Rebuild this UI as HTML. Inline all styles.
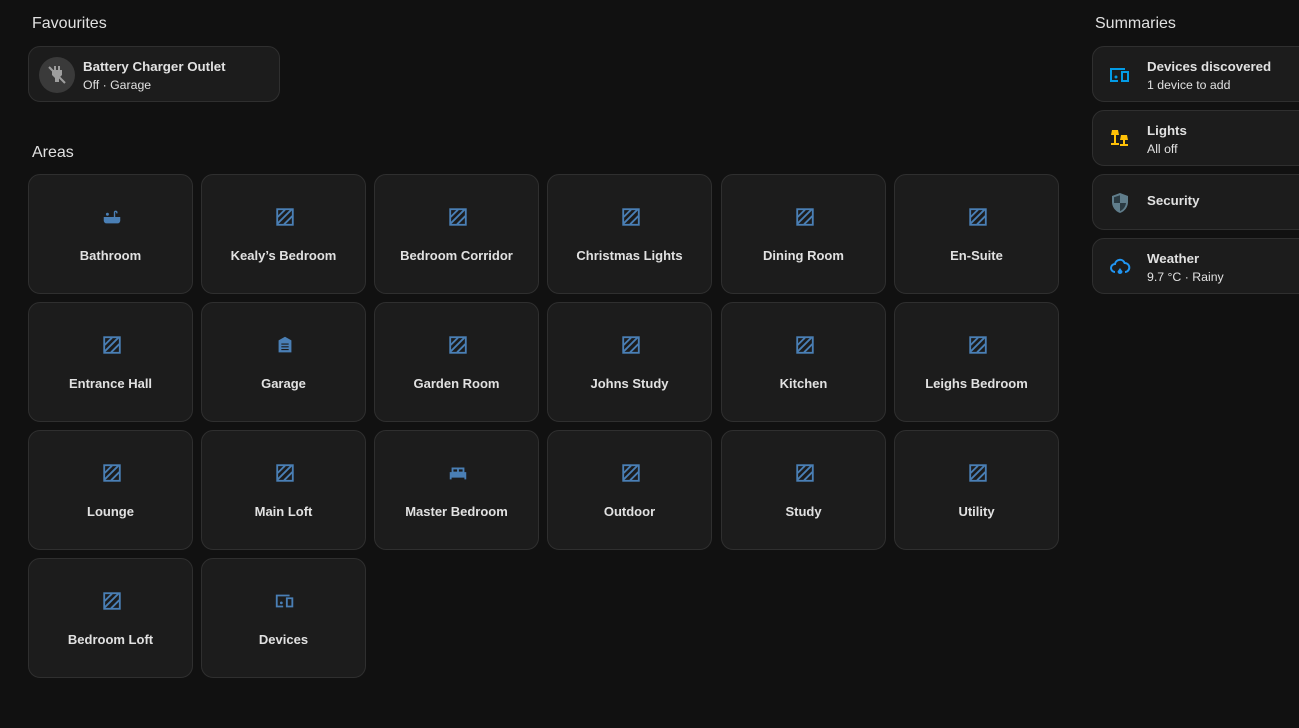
<!DOCTYPE html><html><head><style>
body{margin:0;background:#111111;width:1299px;height:728px;overflow:hidden;font-family:"Liberation Sans",Roboto,sans-serif;color:#e1e1e1;position:relative}
h2{position:absolute;margin:0;font-size:16px;font-weight:normal;color:#e1e1e1}
.card{position:absolute;background:#1c1c1c;border:1px solid #2f2f2f;border-radius:12px;box-sizing:border-box}
.tile{width:165px;height:120px}
.tile svg{position:absolute;left:72px;top:31px;width:22px;height:22px}
.tile .l{position:absolute;left:0;right:0;top:73px;text-align:center;font-size:13px;font-weight:bold;color:#e1e1e1}
.row{height:56px}
.row .t{position:absolute;left:54px;top:12px;font-size:13.3px;font-weight:bold}
.row .s{position:absolute;left:54px;top:31px;font-size:12.3px;color:#e1e1e1}
.row svg{position:absolute;left:15px;top:16px;width:24px;height:24px}
</style></head><body>
<h2 style="left:32px;top:15px">Favourites</h2>
<h2 style="left:32px;top:144px">Areas</h2>
<h2 style="left:1095px;top:15px">Summaries</h2>

<div class="card row" style="left:28px;top:46px;width:252px">
<div style="position:absolute;left:10px;top:10px;width:36px;height:36px;border-radius:50%;background:#3a3a3a"></div>
<svg viewBox="0 0 24 24" style="left:16px;top:16px"><path fill="#9e9e9e" d="M9 3v4H7v5l3 3v4h4v-4l3-3V7h-2V3h-2v4h-2V3z"/><path stroke="#9e9e9e" stroke-width="2" d="M4 4l16 16"/></svg>
<div class="t">Battery Charger Outlet</div><div class="s">Off · Garage</div></div>

<div class="card row" style="left:1092px;top:46px;width:220px">
<svg viewBox="0 0 24 24"><path fill="none" stroke="#039be5" stroke-width="2" d="M3 17V6h14M2 18h8M14 9h6v9h-6z"/><circle cx="8" cy="14" r="1.5" fill="#039be5"/></svg>
<div class="t">Devices discovered</div><div class="s">1 device to add</div></div>
<div class="card row" style="left:1092px;top:110px;width:220px">
<svg viewBox="0 0 24 24" fill="#ffc107"><path d="M4 3h6l1 5H3z M6 8h2v8H6z M3 16h8v2H3z M13 8h6l1 5h-8z M15 13h2v4h-2z M12 17h8v2h-8z"/></svg>
<div class="t">Lights</div><div class="s">All off</div></div>
<div class="card row" style="left:1092px;top:174px;width:220px">
<svg viewBox="0 0 24 24"><path fill="#607d8b" d="M12 2l8 3v6c0 5-3.5 9.5-8 11-4.5-1.5-8-6-8-11V5z"/><path fill="#2a3a42" d="M12 4.2V12h6c-.4 3.7-2.9 7-6 8.2V12H6V6.3z"/></svg>
<div class="t" style="top:18px">Security</div></div>
<div class="card row" style="left:1092px;top:238px;width:220px">
<svg viewBox="0 0 24 24"><path fill="none" stroke="#2196f3" stroke-width="2" d="M7 17a4 4 0 0 1 0-8 5 5 0 0 1 9.6-1A4.5 4.5 0 0 1 17 17"/><path fill="#2196f3" d="M12 13l2.5 3.5a2.5 2.5 0 1 1-5 0z"/></svg>
<div class="t">Weather</div><div class="s">9.7 °C · Rainy</div></div>

<div id="g"></div>
<script>
var names=["Bathroom","Kealy’s Bedroom","Bedroom Corridor","Christmas Lights","Dining Room","En-Suite","Entrance Hall","Garage","Garden Room","Johns Study","Kitchen","Leighs Bedroom","Lounge","Main Loft","Master Bedroom","Outdoor","Study","Utility","Bedroom Loft","Devices"];
var xs=[28,201,374,547,721,894];
var C="#4a7fb5";
var hatch='<svg viewBox="0 0 24 24"><rect x="3.5" y="3.5" width="17" height="17" fill="none" stroke="'+C+'" stroke-width="2"/><path stroke="'+C+'" stroke-width="2" d="M4 12L12 4M4 19L19 4M11 20L20 11"/></svg>';
var icons={0:'<svg viewBox="0 0 24 24" fill="'+C+'"><circle cx="7" cy="9" r="1.6"/><path d="M3 12h11V7a2 2 0 0 1 4 0v1h-1.5V7a.5.5 0 0 0-1 0v5H21v4a3 3 0 0 1-3 3H6a3 3 0 0 1-3-3z"/></svg>',
7:'<svg viewBox="0 0 24 24" fill="'+C+'"><path d="M12 3l7 4v13H5V7z"/><path stroke="#1c1c1c" stroke-width="1.3" d="M8 11h8M8 14h8M8 17h8"/></svg>',
14:'<svg viewBox="0 0 24 24" fill="'+C+'"><path d="M5 6h14v5H5z M3 11h18v6H3z M3 17h2v2H3z M19 17h2v2h-2z"/><path fill="#1c1c1c" d="M7 8h4v2.5H7zM13 8h4v2.5h-4z"/></svg>',
19:'<svg viewBox="0 0 24 24"><path fill="none" stroke="'+C+'" stroke-width="2" d="M3 17V6h14M2 18h8M14 9h6v9h-6z"/><circle cx="8" cy="14" r="1.5" fill="'+C+'"/></svg>'};
var h="";
names.forEach(function(n,i){var x=xs[i%6],y=174+Math.floor(i/6)*128;
h+='<div class="card tile" style="left:'+x+'px;top:'+y+'px">'+(icons[i]||hatch)+'<div class="l">'+n+'</div></div>';});
document.getElementById("g").innerHTML=h;
</script>
</body></html>
